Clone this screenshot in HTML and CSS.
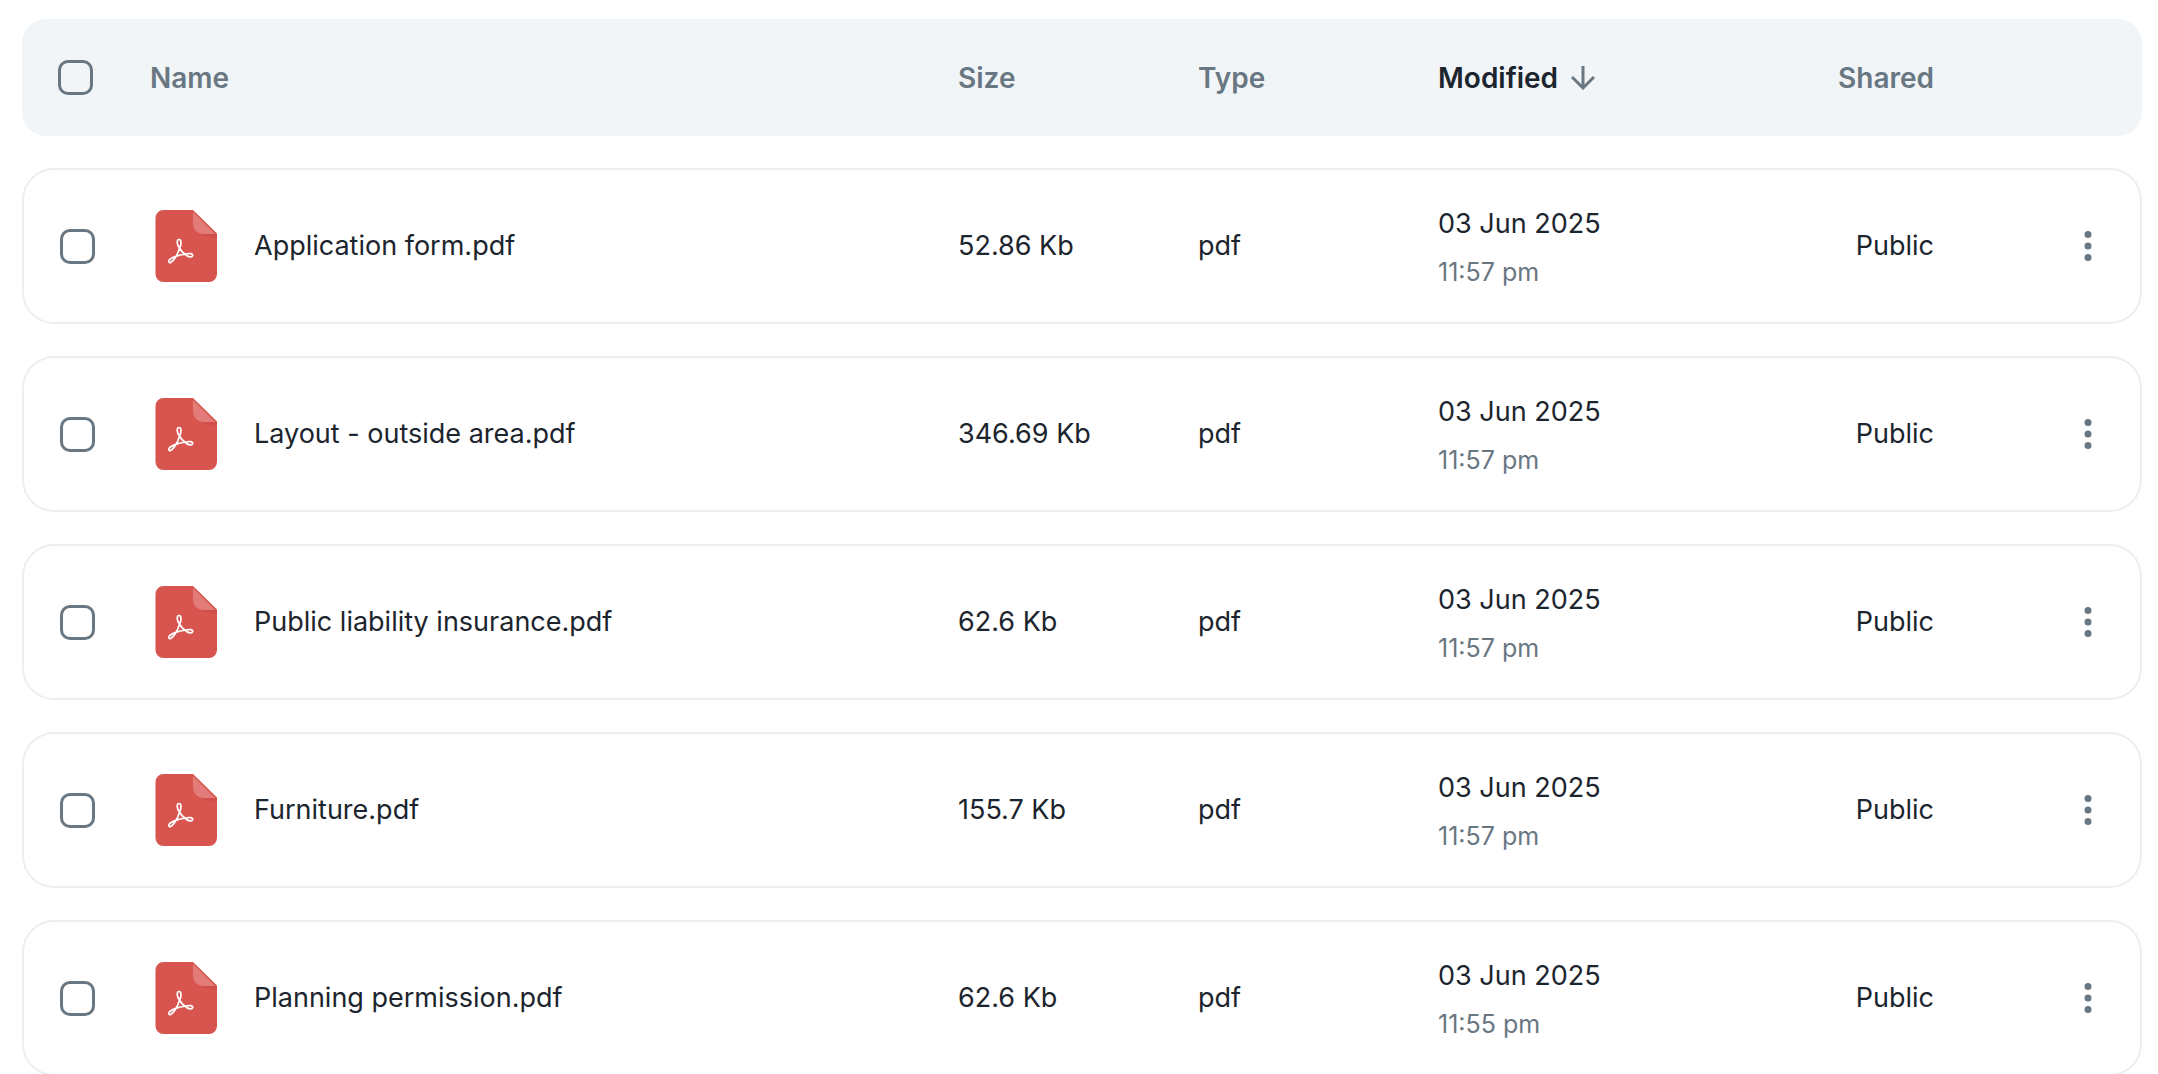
FILE: index.html
```html
<!DOCTYPE html>
<html lang="en">
<head>
    <meta charset="UTF-8">
    <meta name="viewport" content="width=device-width, initial-scale=1.0">
    <title>Files</title>
    <link rel="stylesheet" href="styles.css">
</head>
<body>
    <!-- Shared icons -->
    <svg class="sprite" aria-hidden="true">
        <symbol id="icon-pdf" viewBox="0 0 72 72">
            <path fill="#d8544f" d="M13.500 0H43l24 23.500V64a8 8 0 0 1-8 8H13.500a8 8 0 0 1-8-8V8a8 8 0 0 1 8-8z"/>
            <path fill="#c94a45" opacity=".4" d="M43 15c2 7 6 9 11 9h13v4c-13-2-22-5-24-13z"/>
            <path fill="#e17c78" d="M43 2l22 22H53a10 10 0 0 1-10-10z"/>
            <path fill="none" stroke="#fff" stroke-width="1.7" stroke-linejoin="round" d="M29.500 38C27 35 26.200 29.500 29 29.500c2.800 0 2.500 5.500.5 8.500-1 4-3 8-4.500 10-2.500 4-6 6-6.200 3.500C18.600 49 22 47.800 25.500 46.500c3.500-1.300 7-2 10.500-2.500 3.500-1 7-.5 6.600 1.600-.6 2.400-4.600 1.200-7.100-1.100-2.500-1.500-4.500-3.500-6-6.500z"/>
        </symbol>
        <symbol id="icon-more" viewBox="0 0 48 48">
            <circle cx="24" cy="12.400" r="3.500"/>
            <circle cx="24" cy="24" r="3.500"/>
            <circle cx="24" cy="35.600" r="3.500"/>
        </symbol>
    </svg>

    <table class="files">
        <colgroup>
            <col class="col-check">
            <col class="col-name">
            <col class="col-size">
            <col class="col-type">
            <col class="col-modified">
            <col class="col-shared">
            <col class="col-actions">
        </colgroup>
        <thead>
            <tr>
                <th class="check"><input type="checkbox" aria-label="Select all files"></th>
                <th>Name</th>
                <th>Size</th>
                <th>Type</th>
                <th aria-sort="descending">
                    <button class="sort" type="button">Modified
                        <svg class="arrow" viewBox="0 0 24 24" aria-hidden="true"><path d="M12 0v22M1 11l11 11 11-11"/></svg>
                    </button>
                </th>
                <th class="shared">Shared</th>
                <td class="actions"></td>
            </tr>
        </thead>
        <tbody>
            <tr>
                <td class="check"><input type="checkbox" aria-labelledby="file-1"></td>
                <td><div class="name"><svg class="file-icon" aria-hidden="true"><use href="#icon-pdf"/></svg><span id="file-1">Application form.pdf</span></div></td>
                <td>52.86 Kb</td>
                <td>pdf</td>
                <td><div class="date">03 Jun 2025</div><div class="time">11:57 pm</div></td>
                <td class="shared">Public</td>
                <td class="actions"><button class="more" type="button" aria-label="More actions"><svg aria-hidden="true"><use href="#icon-more"/></svg></button></td>
            </tr>
            <tr>
                <td class="check"><input type="checkbox" aria-labelledby="file-2"></td>
                <td><div class="name"><svg class="file-icon" aria-hidden="true"><use href="#icon-pdf"/></svg><span id="file-2">Layout - outside area.pdf</span></div></td>
                <td>346.69 Kb</td>
                <td>pdf</td>
                <td><div class="date">03 Jun 2025</div><div class="time">11:57 pm</div></td>
                <td class="shared">Public</td>
                <td class="actions"><button class="more" type="button" aria-label="More actions"><svg aria-hidden="true"><use href="#icon-more"/></svg></button></td>
            </tr>
            <tr>
                <td class="check"><input type="checkbox" aria-labelledby="file-3"></td>
                <td><div class="name"><svg class="file-icon" aria-hidden="true"><use href="#icon-pdf"/></svg><span id="file-3">Public liability insurance.pdf</span></div></td>
                <td>62.6 Kb</td>
                <td>pdf</td>
                <td><div class="date">03 Jun 2025</div><div class="time">11:57 pm</div></td>
                <td class="shared">Public</td>
                <td class="actions"><button class="more" type="button" aria-label="More actions"><svg aria-hidden="true"><use href="#icon-more"/></svg></button></td>
            </tr>
            <tr>
                <td class="check"><input type="checkbox" aria-labelledby="file-4"></td>
                <td><div class="name"><svg class="file-icon" aria-hidden="true"><use href="#icon-pdf"/></svg><span id="file-4">Furniture.pdf</span></div></td>
                <td>155.7 Kb</td>
                <td>pdf</td>
                <td><div class="date">03 Jun 2025</div><div class="time">11:57 pm</div></td>
                <td class="shared">Public</td>
                <td class="actions"><button class="more" type="button" aria-label="More actions"><svg aria-hidden="true"><use href="#icon-more"/></svg></button></td>
            </tr>
            <tr>
                <td class="check"><input type="checkbox" aria-labelledby="file-5"></td>
                <td><div class="name"><svg class="file-icon" aria-hidden="true"><use href="#icon-pdf"/></svg><span id="file-5">Planning permission.pdf</span></div></td>
                <td>62.6 Kb</td>
                <td>pdf</td>
                <td><div class="date">03 Jun 2025</div><div class="time">11:55 pm</div></td>
                <td class="shared">Public</td>
                <td class="actions"><button class="more" type="button" aria-label="More actions"><svg aria-hidden="true"><use href="#icon-more"/></svg></button></td>
            </tr>
        </tbody>
    </table>
</body>
</html>
```

FILE: styles.css
```css
* {
    box-sizing: border-box;
}
html {
    scrollbar-width: none;
}
body {
    margin: 0;
    padding: 19px 16px 0 22px;
    background-color: #fff;
    color: #1c252e;
    font-family: Inter, sans-serif;
    font-size: 28px;
    line-height: 44px;
}
.sprite {
    display: none;
}
.files {
    width: 100%;
    /* cancels the spacing above the header row */
    margin-top: -32px;
    table-layout: fixed;
    border-collapse: separate;
    border-spacing: 0 32px;
}
.col-check {
    width: 128px;
}
.col-size,
.col-type {
    width: 240px;
}
.col-modified {
    width: 280px;
}
.col-shared {
    width: 216px;
}
.col-actions {
    width: 208px;
}
th,
td {
    padding: 0;
    text-align: left;
    vertical-align: middle;
}

/* Header */
thead th,
thead td {
    height: 117px;
    background-color: #f1f5f8;
    color: #697782;
    font-weight: 600;
}
thead .check {
    border-radius: 24px 0 0 24px;
}
thead .actions {
    border-radius: 0 24px 24px 0;
}

/* Rows */
tbody td {
    padding: 32px 0;
    border: solid #ebeff3;
    border-width: 2px 0;
    font-size: 27px;
}
tbody .check {
    border-left-width: 2px;
    border-radius: 32px 0 0 32px;
}
tbody .actions {
    border-right-width: 2px;
    border-radius: 0 32px 32px 0;
}
td.check,
th.check {
    padding-left: 36px;
}
td.actions {
    padding-right: 28px;
    text-align: right;
}
td.shared,
th.shared {
    text-align: right;
}
.name {
    display: flex;
    align-items: center;
    gap: 32px;
}
.file-icon {
    flex: none;
    width: 72px;
    height: 72px;
}
.time {
    margin-top: 8px;
    color: #697782;
    font-size: 25px;
    line-height: 36px;
}

/* Controls */
input[type="checkbox"] {
    display: block;
    appearance: none;
    width: 35px;
    height: 35px;
    margin: 0;
    border: 3px solid #697782;
    border-radius: 10px;
}
input[type="checkbox"]:checked {
    background-color: #697782;
}
button {
    padding: 0;
    border: 0;
    background: none;
    font: inherit;
    cursor: pointer;
}
.sort {
    display: flex;
    align-items: center;
    gap: 13px;
    color: #1c252e;
}
.arrow {
    width: 24px;
    height: 24px;
    fill: none;
    stroke: #697782;
    stroke-width: 3;
}
.more {
    display: inline-block;
    width: 48px;
    height: 48px;
    vertical-align: middle;
}
.more svg {
    display: block;
    width: 48px;
    height: 48px;
    fill: #697782;
}
```
